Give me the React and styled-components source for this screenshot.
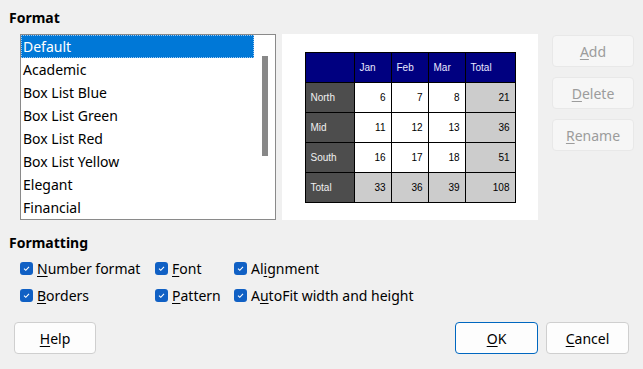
import React from "react";
import styled, { createGlobalStyle } from "styled-components";

const GlobalStyle = createGlobalStyle`
  html, body {
    margin: 0;
    padding: 0;
    background: #f0f0f0;
  }
  body {
    font-family: "Noto Sans", "Open Sans", sans-serif;
    font-size: 14px;
    color: #000;
  }
`;

const Dialog = styled.div`
  width: 643px;
  height: 369px;
  box-sizing: border-box;
  background: #f0f0f0;
  padding: 8px 0 0 0;
  display: flex;
  flex-direction: column;
`;

const SectionTitle = styled.div`
  font-weight: bold;
  font-size: 14px;
  line-height: 19px;
  margin-left: 9px;
`;

const TopRow = styled.div`
  display: flex;
  margin-top: 7px;
  height: 186px;
`;

const ListBox = styled.div`
  margin-left: 20px;
  width: 256px;
  height: 186px;
  box-sizing: border-box;
  border: 1px solid #8a8a8a;
  background: #fff;
  position: relative;
  overflow: hidden;
`;

const ListItem = styled.div`
  height: 23px;
  line-height: 23px;
  width: 233px;
  box-sizing: border-box;
  padding-left: 2px;
  background: ${(p) => (p.$selected ? "#0078d7" : "transparent")};
  color: ${(p) => (p.$selected ? "#fff" : "#000")};
  outline: ${(p) => (p.$selected ? "1px dotted #9ec8f0" : "none")};
  outline-offset: -1px;
`;

const ScrollThumb = styled.div`
  position: absolute;
  left: 241px;
  top: 21px;
  width: 6px;
  height: 100px;
  background: #888;
`;

const Preview = styled.div`
  margin-left: 6px;
  width: 256px;
  height: 186px;
  background: #fff;
  display: flex;
  justify-content: center;
  padding-top: 18px;
  box-sizing: border-box;
`;

const Table = styled.table`
  border-collapse: collapse;
  height: 151px;
  font-family: "Liberation Sans", Arial, sans-serif;
  font-size: 10px;
  align-self: flex-start;
`;

const Cell = styled.td`
  border: 1px solid #000;
  height: 29px;
  padding: 0 5px;
  width: ${(p) => p.$w}px;
  box-sizing: border-box;
  text-align: ${(p) => (p.$kind === "num" || p.$kind === "total" ? "right" : "left")};
  background: ${(p) =>
    p.$kind === "head"
      ? "#000080"
      : p.$kind === "side"
      ? "#4d4d4d"
      : p.$kind === "total"
      ? "#cccccc"
      : "#fff"};
  color: ${(p) => (p.$kind === "head" ? "#e8e8ff" : p.$kind === "side" ? "#f0f0f0" : "#000")};
`;

const ButtonColumn = styled.div`
  margin-left: 14px;
  display: flex;
  flex-direction: column;
  gap: 10px;
  padding-top: 1px;
`;

const Button = styled.button`
  width: ${(p) => p.$w || 82}px;
  height: 32px;
  box-sizing: border-box;
  font-family: inherit;
  font-size: 14px;
  border-radius: 4px;
  background: ${(p) => (p.$disabled ? "#f6f6f6" : "#fdfdfd")};
  color: ${(p) => (p.$disabled ? "#9c9c9c" : "#000")};
  border: 1px solid
    ${(p) => (p.$default ? "#0067c0" : p.$disabled ? "#e8e8e8" : "#cfcfcf")};
  padding: 0;
  cursor: default;

  u {
    text-decoration: underline;
    text-underline-offset: 2px;
  }
`;

const FormattingTitle = styled(SectionTitle)`
  margin-top: 13px;
`;

const CheckGrid = styled.div`
  display: grid;
  grid-template-columns: 135px 79px auto;
  row-gap: 7px;
  margin: 6px 0 0 20px;
`;

const CheckRow = styled.label`
  display: flex;
  align-items: center;
  gap: 4px;
  height: 20px;

  u {
    text-decoration: underline;
    text-underline-offset: 2px;
  }
`;

const Box = styled.span`
  width: 13px;
  height: 13px;
  border-radius: 3px;
  background: #1060c4;
  display: inline-flex;
  align-items: center;
  justify-content: center;
  flex: none;
`;

const Footer = styled.div`
  display: flex;
  align-items: center;
  margin-top: auto;
  margin-bottom: 15px;
  padding: 0 14px;
`;

const Spacer = styled.div`
  flex: 1;
`;

const FooterRight = styled.div`
  display: flex;
  gap: 8px;
`;

const Check = ({ label, ul }) => {
  const i = label.indexOf(ul);
  return (
    <CheckRow>
      <Box>
        <svg width="9" height="9" viewBox="0 0 9 9">
          <path d="M2 4.6 L3.8 6.3 L7 2.8" stroke="#fff" strokeWidth="1.1" fill="none" />
        </svg>
      </Box>
      <span>
        {label.slice(0, i)}
        <u>{ul}</u>
        {label.slice(i + 1)}
      </span>
    </CheckRow>
  );
};

const items = [
  "Default",
  "Academic",
  "Box List Blue",
  "Box List Green",
  "Box List Red",
  "Box List Yellow",
  "Elegant",
  "Financial",
];

const widths = [49, 37, 37, 37, 50];
const rows = [
  ["North", 6, 7, 8, 21],
  ["Mid", 11, 12, 13, 36],
  ["South", 16, 17, 18, 51],
  ["Total", 33, 36, 39, 108],
];

export default function App() {
  return (
    <>
      <GlobalStyle />
      <Dialog>
        <SectionTitle>Format</SectionTitle>
        <TopRow>
          <ListBox>
            {items.map((it, i) => (
              <ListItem key={it} $selected={i === 0}>
                {it}
              </ListItem>
            ))}
            <ScrollThumb />
          </ListBox>
          <Preview>
            <Table>
              <tbody>
                <tr>
                  <Cell $kind="head" $w={widths[0]} />
                  {["Jan", "Feb", "Mar", "Total"].map((h, i) => (
                    <Cell key={h} $kind="head" $w={widths[i + 1]}>
                      {h}
                    </Cell>
                  ))}
                </tr>
                {rows.map((r, ri) => (
                  <tr key={r[0]}>
                    {r.map((v, ci) => (
                      <Cell
                        key={ci}
                        $w={widths[ci]}
                        $kind={
                          ci === 0 ? "side" : ci === 4 || ri === 3 ? "total" : "num"
                        }
                      >
                        {v}
                      </Cell>
                    ))}
                  </tr>
                ))}
              </tbody>
            </Table>
          </Preview>
          <ButtonColumn>
            <Button $disabled>
              <u>A</u>dd
            </Button>
            <Button $disabled>
              <u>D</u>elete
            </Button>
            <Button $disabled>
              <u>R</u>ename
            </Button>
          </ButtonColumn>
        </TopRow>
        <FormattingTitle>Formatting</FormattingTitle>
        <CheckGrid>
          <Check label="Number format" ul="N" />
          <Check label="Font" ul="F" />
          <Check label="Alignment" ul="i" />
          <Check label="Borders" ul="B" />
          <Check label="Pattern" ul="P" />
          <Check label="AutoFit width and height" ul="u" />
        </CheckGrid>
        <Footer>
          <Button>
            <u>H</u>elp
          </Button>
          <Spacer />
          <FooterRight>
            <Button $default $w={83}>
              <u>O</u>K
            </Button>
            <Button $w={83}>
              <u>C</u>ancel
            </Button>
          </FooterRight>
        </Footer>
      </Dialog>
    </>
  );
}
